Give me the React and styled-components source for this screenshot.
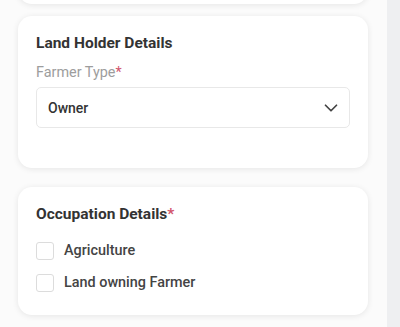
import React from 'react';
import styled, { createGlobalStyle } from 'styled-components';
import { ChevronDown } from 'lucide-react';

const Global = createGlobalStyle`
  html, body {
    margin: 0;
    padding: 0;
    background: #fbfbfb;
    font-family: Roboto, "Noto Sans", Arial, sans-serif;
    overflow: hidden;
  }
`;

const Screen = styled.div`
  display: flex;
  width: 400px;
  height: 327px;
  overflow: hidden;
`;

const Main = styled.div`
  flex: 1;
  display: flex;
  flex-direction: column;
  padding: 0 19px 0 18px;
  background: #fbfbfb;
`;

const Scrollbar = styled.div`
  width: 13px;
  background: #eeeff1;
`;

const Card = styled.section`
  background: #fff;
  border-radius: 14px;
  box-shadow: 0 1px 6px rgba(0, 0, 0, 0.09);
  padding: ${p => p.$pad || '0'};
  margin-bottom: ${p => p.$gap || 0}px;
  height: ${p => (p.$h ? `${p.$h}px` : 'auto')};
  box-sizing: border-box;
`;

const Stub = styled(Card)`
  margin-top: -26px;
`;

const Title = styled.h2`
  margin: 0;
  font-size: 15.5px;
  line-height: 20px;
  font-weight: 700;
  color: #333;
`;

const Star = styled.span`
  color: #d2556c;
`;

const Label = styled.div`
  margin-top: 10px;
  font-size: 14.4px;
  line-height: 20px;
  color: #9d9d9d;
`;

const Select = styled.div`
  margin-top: 4px;
  height: 41px;
  box-sizing: border-box;
  border: 1px solid #e8e8e8;
  border-radius: 5px;
  display: flex;
  align-items: center;
  justify-content: space-between;
  padding: 0 7px 0 11px;
  font-size: 14px;
  font-weight: 500;
  color: #333;
`;

const Options = styled.div`
  display: flex;
  flex-direction: column;
  gap: 14px;
  margin-top: 18px;
`;

const Option = styled.label`
  display: flex;
  align-items: center;
  gap: 10px;
  font-size: 14.4px;
  line-height: 18px;
  font-weight: 500;
  color: #444;
`;

const Box = styled.span`
  width: 16px;
  height: 16px;
  border: 1px solid #dcdcdc;
  border-radius: 3px;
  background: #fff;
`;

export default function App() {
  return (
    <Screen>
      <Global />
      <Main>
        <Stub $h={30} $gap={12} />
        <Card $pad="17px 18px 0" $h={152} $gap={19}>
          <Title>Land Holder Details</Title>
          <Label>Farmer Type<Star>*</Star></Label>
          <Select>
            <span>Owner</span>
            <ChevronDown size={22} strokeWidth={1.9} color="#444" />
          </Select>
        </Card>
        <Card $pad="17px 18px 0" $h={128}>
          <Title>Occupation Details<Star>*</Star></Title>
          <Options>
            <Option><Box />Agriculture</Option>
            <Option><Box />Land owning Farmer</Option>
          </Options>
        </Card>
      </Main>
      <Scrollbar />
    </Screen>
  );
}
